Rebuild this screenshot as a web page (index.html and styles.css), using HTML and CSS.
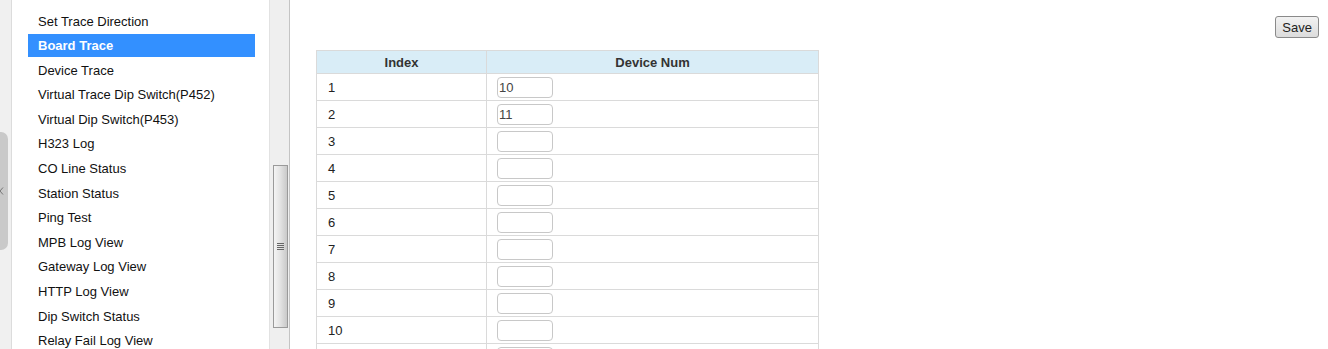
FILE: index.html
```
<!DOCTYPE html>
<html lang="en">
<head>
<meta charset="UTF-8">
<title>Board Trace</title>
<link rel="stylesheet" href="styles.css">
</head>
<body>
<div class="page">
    <div class="edge">
        <div class="edge-tab">
            <svg width="5" height="8" viewBox="0 0 5 8"><polyline points="4,0.5 1,4 4,7.5" fill="none" stroke="#777" stroke-width="1"/></svg>
        </div>
    </div>
    <div class="sidebar">
        <ul class="menu">
            <li>Set Trace Direction</li>
            <li class="active">Board Trace</li>
            <li>Device Trace</li>
            <li>Virtual Trace Dip Switch(P452)</li>
            <li>Virtual Dip Switch(P453)</li>
            <li>H323 Log</li>
            <li>CO Line Status</li>
            <li>Station Status</li>
            <li>Ping Test</li>
            <li>MPB Log View</li>
            <li>Gateway Log View</li>
            <li>HTTP Log View</li>
            <li>Dip Switch Status</li>
            <li>Relay Fail Log View</li>
        </ul>
    </div>
    <div class="scrollbar">
        <div class="thumb"><span class="grip"></span></div>
    </div>
    <div class="content">
        <div class="toolbar">
            <button class="save">Save</button>
        </div>
        <table class="grid">
            <thead>
                <tr><th class="col-index">Index</th><th>Device Num</th></tr>
            </thead>
            <tbody>
                <tr><td>1</td><td><input type="text" value="10"></td></tr>
                <tr><td>2</td><td><input type="text" value="11"></td></tr>
                <tr><td>3</td><td><input type="text"></td></tr>
                <tr><td>4</td><td><input type="text"></td></tr>
                <tr><td>5</td><td><input type="text"></td></tr>
                <tr><td>6</td><td><input type="text"></td></tr>
                <tr><td>7</td><td><input type="text"></td></tr>
                <tr><td>8</td><td><input type="text"></td></tr>
                <tr><td>9</td><td><input type="text"></td></tr>
                <tr><td>10</td><td><input type="text"></td></tr>
                <tr><td></td><td><input type="text"></td></tr>
            </tbody>
        </table>
    </div>
</div>
</body>
</html>
```
FILE: styles.css
```
/* Página de trace */
body {
    margin: 0;
    padding: 0;
    font-family: "Liberation Sans", Arial, sans-serif;
    font-size: 13px;
    color: #222;
    background-color: #fff;
    overflow: hidden;
}

.page {
    display: flex;
    height: 349px;
    overflow: hidden;
}

/* Faixa cinza da esquerda */
.edge {
    width: 12px;
    background-color: #f0f0f0;
    border-right: 1px solid #dcdcdc;
    display: flex;
    align-items: center;
    padding-top: 33px;
    box-sizing: border-box;
}

.edge-tab {
    width: 8px;
    height: 118px;
    background-color: #c9c9c9;
    border-radius: 0 7px 7px 0;
    display: flex;
    align-items: center;
    overflow: hidden;
}

.edge-tab svg {
    margin-left: -1px;
}

/* Menu lateral */
.sidebar {
    width: 257px;
    overflow: hidden;
}

.menu {
    list-style: none;
    margin: 0;
    padding: 9.5px 0 0 15px;
}

.menu li {
    width: 227px;
    height: 23px;
    line-height: 24px;
    margin-bottom: 1.6px;
    margin-left: 1px;
    padding-left: 10px;
    box-sizing: border-box;
    color: #111;
    white-space: nowrap;
}

.menu li.active {
    background-color: #3390ff;
    color: #fff;
    font-weight: bold;
}

/* Barra de rolagem */
.scrollbar {
    width: 21px;
    background-color: #efefef;
    border-left: 1px solid #e2e2e2;
    border-right: 1px solid #c4c4c4;
    box-sizing: border-box;
    padding: 165px 1px 0 3px;
}

.thumb {
    height: 163px;
    border: 1px solid #9a9a9a;
    background: linear-gradient(to right, #f4f4f4, #e2e2e2 50%, #c9c9c9);
    display: flex;
    align-items: center;
    justify-content: center;
    box-sizing: border-box;
}

.grip {
    width: 7px;
    height: 7px;
    background: repeating-linear-gradient(to bottom, #666 0, #666 1px, transparent 1px, transparent 2px);
}

/* Conteúdo */
.content {
    flex: 1;
    padding: 16px 9px 0 26px;
}

.toolbar {
    display: flex;
    justify-content: flex-end;
    height: 34px;
}

.save {
    height: 22px;
    padding: 0 6px;
    font-family: "Liberation Sans", Arial, sans-serif;
    font-size: 13px;
    color: #222;
    border: 1px solid #8a8a8a;
    border-radius: 3px;
    background: linear-gradient(to bottom, #f2f2f2, #dcdcdc);
}

.grid {
    border-collapse: collapse;
    width: 503px;
}

.grid th,
.grid td {
    border: 1px solid #dadada;
}

.grid th {
    height: 22px;
    padding: 0;
    background-color: #d9edf7;
    color: #333;
    font-size: 13px;
}

.grid .col-index {
    width: 169px;
}

.grid td {
    height: 26px;
    padding: 0 0 0 11px;
    color: #222;
}

.grid td + td {
    padding-left: 10px;
}

.grid input {
    width: 56px;
    height: 21px;
    box-sizing: border-box;
    padding: 0 1px;
    border: 1px solid #c8c8c8;
    border-radius: 4px;
    font-family: "Liberation Sans", Arial, sans-serif;
    font-size: 13px;
    color: #444;
    display: block;
}
```
